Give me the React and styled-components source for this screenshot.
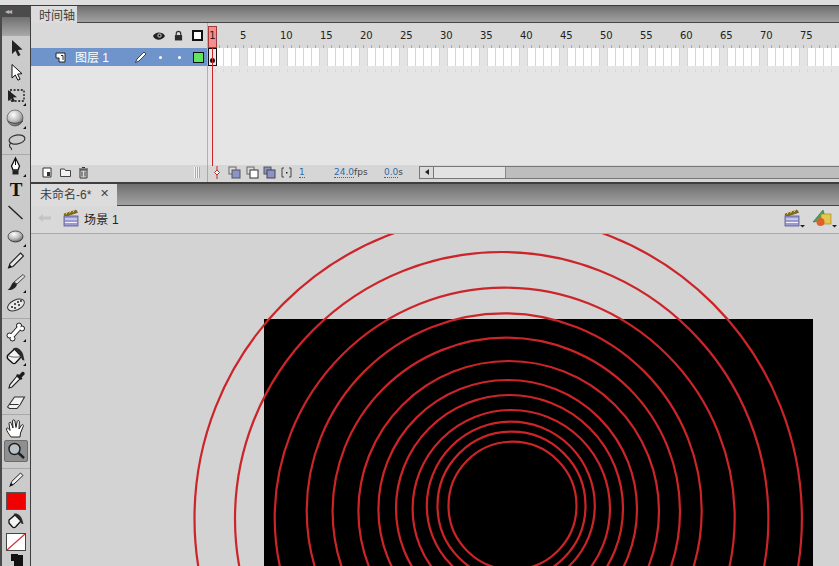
import React from 'react';
import styled, { createGlobalStyle } from 'styled-components';

const GlobalStyle = createGlobalStyle`
  html, body {
    margin: 0;
    padding: 0;
    background: #d3d3d3;
  }
  * {
    box-sizing: border-box;
  }
`;

const Window = styled.div`
  width: 839px;
  height: 566px;
  overflow: hidden;
  display: flex;
  flex-direction: column;
  font-family: 'Liberation Sans', 'Noto Sans CJK SC', sans-serif;
  color: #222;
  background: #d3d3d3;
`;

const TopStrip = styled.div`
  height: 6px;
  flex: none;
  background: #dedede;
  border-bottom: 1px solid #3c3c3c;
`;

const Workspace = styled.div`
  flex: 1;
  min-height: 0;
  display: flex;
`;

/* left tool column */
const Toolbar = styled.div`
  width: 31px;
  flex: none;
  display: flex;
  flex-direction: column;
  background: #cbcbcb;
  border-left: 2px solid #4a4a4a;
  border-right: 1px solid #3e3e3e;
`;

const ToolbarHead = styled.div`
  height: 11px;
  margin-left: -2px;
  margin-right: -1px;
  background: #4b4b4b;
  color: #b9b9b9;
  font-size: 8px;
  line-height: 11px;
  padding-left: 5px;
  letter-spacing: -1px;
`;

const ToolbarGrip = styled.div`
  height: 19px;
  flex: none;
  background: linear-gradient(#707070, #a9a9a9);
`;

const Tool = styled.div`
  height: ${(p) => p.$h}px;
  flex: none;
  display: flex;
  align-items: center;
  justify-content: center;
  font-family: 'Liberation Serif', serif;
  font-weight: 700;
  font-size: 19px;
  color: #111;
  border-radius: 2px;
  ${(p) => p.$active && 'background: #8f8f8f; border: 1px solid #6c6c6c; margin: 0 2px;'}
`;

const ToolSep = styled.div`
  height: ${(p) => p.$h || 1}px;
  flex: none;
  border-bottom: 1px solid #a9a9a9;
`;

const Swatch = styled.div`
  width: 20px;
  height: 18px;
  background: ${(p) => p.$color};
  border: 1px solid #555;
`;

const Main = styled.div`
  flex: 1;
  min-width: 0;
  display: flex;
  flex-direction: column;
`;

const TabBar = styled.div`
  height: ${(p) => p.$h}px;
  flex: none;
  display: flex;
  background: linear-gradient(#6f6f6f, #a2a2a2);
  border-bottom: 1px solid #444;
`;

const Tab = styled.div`
  width: ${(p) => p.$w}px;
  display: flex;
  align-items: center;
  gap: 9px;
  padding-left: ${(p) => p.$pad}px;
  padding-bottom: ${(p) => p.$pb || 0}px;
  background: #dcdcdc;
  font-size: 12px;
  color: #3c3c3c;
  margin-bottom: -1px;
`;

const TabClose = styled.span`
  font-size: 11px;
  color: #444;
`;

/* timeline panel */
const Timeline = styled.div`
  position: relative;
  height: 161px;
  flex: none;
  display: grid;
  grid-template-columns: 177px 1fr;
  grid-template-rows: 25px 18px 1fr 17px;
  background: #e5e5e5;
  border-bottom: 2px solid #3f3f3f;
`;

const LayerHead = styled.div`
  background: #d9d9d9;
  display: flex;
  align-items: center;
  justify-content: flex-end;
  gap: 9px;
  padding-right: 4px;
  border-right: 1px solid #b0b0b0;
`;

const Ruler = styled.div`
  display: flex;
  padding-left: 32px;
  background-color: #d9d9d9;
  background-image: repeating-linear-gradient(90deg, transparent 0 3px, #a8a8a8 3px 4px, transparent 4px 8px);
  background-size: 100% 3px;
  background-position: 0 bottom;
  background-repeat: no-repeat;
`;

const RulerNum = styled.span`
  width: 40px;
  flex: none;
  font-family: 'DejaVu Sans', sans-serif;
  font-size: 10px;
  line-height: 25px;
  color: #222;
`;

const LayerRow = styled.div`
  background: #6e94cb;
  display: flex;
  align-items: center;
  color: #fff;
  font-size: 12px;
  border-right: 1px solid #b0b0b0;
`;

const LayerIcon = styled.span`
  display: flex;
  margin-left: ${(p) => p.$ml}px;
`;

const LayerName = styled.span`
  margin-left: ${(p) => p.$ml}px;
  margin-bottom: 2px;
  width: ${(p) => p.$w}px;
  white-space: nowrap;
`;

const LayerDot = styled.span`
  width: 3px;
  height: 3px;
  border-radius: 50%;
  background: #fff;
  margin-left: ${(p) => p.$ml}px;
`;

const OutlineBox = styled.span`
  width: 11px;
  height: 11px;
  background: ${(p) => p.$fill};
  border: ${(p) => p.$bw}px solid #111;
  margin-left: ${(p) => p.$ml}px;
`;

const FrameRow = styled.div`
  display: flex;
  overflow: hidden;
  background: #fff;
`;

const Frame = styled.div`
  width: 8px;
  flex: none;
  background: ${(p) => (p.$fifth ? '#e4e4e4' : '#fff')};
  border-right: 1px solid #d4d4d4;
`;

const KeyFrame = styled(Frame)`
  border: 1px solid #111;
  width: 9px;
  margin-right: -1px;
  background: #e9e9e9;
  display: flex;
  align-items: flex-end;
  justify-content: center;
  padding-bottom: 2px;
  position: relative;
  z-index: 3;
  &::after {
    content: '';
    width: 5px;
    height: 5px;
    border-radius: 50%;
    background: #111;
  }
`;

const LayerEmpty = styled.div`
  border-right: 1px solid #b0b0b0;
`;

const FramesEmpty = styled.div`
  background-image: repeating-linear-gradient(90deg, transparent 0 7px, #d8d8d8 7px 8px);
  background-size: 100% 3px;
  background-repeat: no-repeat;
  background-position: 0 3px;
`;

const StatusLeft = styled.div`
  background: #d6d6d6;
  display: flex;
  align-items: center;
  padding-left: 10px;
  padding-bottom: 3px;
  gap: 5px;
  border-right: 1px solid #a8a8a8;
  position: relative;
`;

const Grip = styled.div`
  width: 6px;
  height: 11px;
  margin-left: auto;
  margin-right: 7px;
  background: repeating-linear-gradient(90deg, #f4f4f4 0 1px, #aaa 1px 2px, transparent 2px 2px);
`;

const StatusRight = styled.div`
  background: #d6d6d6;
  display: flex;
  align-items: center;
  padding-bottom: 3px;
  font-size: 10px;
  color: #444;
`;

const OnionIcon = styled.span`
  display: flex;
  margin-left: ${(p) => p.$ml}px;
`;

const StatusValue = styled.span`
  margin-left: ${(p) => p.$ml}px;
  white-space: nowrap;
  width: ${(p) => p.$w}px;
  font-family: 'DejaVu Sans', sans-serif;
  font-size: 9px;
`;

const LinkValue = styled.span`
  color: #2f6cae;
  border-bottom: 1px dotted #2f6cae;
`;

const ScrollBar = styled.div`
  margin-left: auto;
  width: 421px;
  height: 13px;
  flex: none;
  display: flex;
  background: #bdbdbd;
  border: 1px solid #777;
  border-right: none;
`;

const ScrollArrow = styled.div`
  width: 14px;
  display: flex;
  align-items: center;
  justify-content: center;
  background: #dadada;
  border-right: 1px solid #777;
  &::before {
    content: '';
    border-style: solid;
    border-width: 3.5px 4px 3.5px 0;
    border-color: transparent #222 transparent transparent;
  }
`;

const ScrollThumb = styled.div`
  width: 72px;
  background: #e2e2e2;
  border-right: 1px solid #888;
`;

const Playhead = styled.div`
  position: absolute;
  left: 177px;
  top: 3px;
  width: 9px;
  height: 22px;
  background: #f58f8f;
  border: 1px solid #a23a3a;
  color: #222;
  font-family: 'DejaVu Sans', sans-serif;
  font-size: 10px;
  line-height: 18px;
  text-align: center;
  z-index: 4;
  &::after {
    content: '';
    position: absolute;
    left: 3px;
    top: 21px;
    width: 1px;
    height: 118px;
    background: #c9272b;
  }
`;

const OnionMarker = styled.span`
  display: flex;
  margin-left: 5px;
`;

/* scene bar */
const SceneBar = styled.div`
  height: 28px;
  flex: none;
  display: flex;
  align-items: center;
  background: #d9d9d9;
  border-bottom: 1px solid #a9a9a9;
  padding-left: 7px;
  padding-bottom: 3px;
  font-size: 12px;
  color: #222;
`;

const BackArrow = styled.svg`
  margin-right: 11px;
`;

const SceneName = styled.span`
  margin-left: 4px;
  letter-spacing: 0.2px;
`;

const SceneTools = styled.div`
  margin-left: auto;
  display: flex;
  align-items: center;
  gap: 6px;
  padding-right: 2px;
`;

/* the stage is a free canvas */
const Stage = styled.div`
  position: relative;
  flex: 1;
  min-height: 0;
  overflow: hidden;
  background: #d3d3d3;
`;

const Artboard = styled.div`
  position: absolute;
  left: 233px;
  top: 85px;
  width: 549px;
  height: 400px;
  background: #000;
`;

const Rings = styled.svg`
  position: absolute;
  left: 0;
  top: 0;
`;

const HiddenDefs = styled.svg`
  position: absolute;
`;

const rings = [
  [498.2, 518.4, 303.7],
  [501.7, 518.7, 266.7],
  [504.7, 517.7, 230],
  [504.2, 510.8, 197.5],
  [506.3, 511.4, 173.7],
  [508.7, 511.3, 150.3],
  [507.7, 509.3, 129.3],
  [509.5, 508.5, 113.5],
  [511.3, 508.7, 98.7],
  [510.8, 505.7, 84],
  [511.5, 505.7, 74],
  [512.5, 505.7, 64],
];

const Corner = () => <path d="M21 18v3h-3z" fill="#111" />;

const Icon = ({ children, s = 22 }) => (
  <svg width={s} height={s} viewBox="0 0 22 22">{children}</svg>
);

const Defs = () => (
  <HiddenDefs width="0" height="0">
    <defs>
      <radialGradient id="ball" cx="40%" cy="30%" r="75%">
        <stop offset="0" stopColor="#fff" />
        <stop offset="0.6" stopColor="#b5b5b5" />
        <stop offset="1" stopColor="#555" />
      </radialGradient>
    </defs>
  </HiddenDefs>
);

const tools = [
  { h: 24, icon: <path d="M7 3v14l3.5-3.2 2.6 5.4 2.4-1.1-2.6-5.2 4.6-.4z" fill="#222" /> },
  { h: 24, icon: <path d="M7 3.5v13.5l3.3-3 2.600 5.200 2.200-1-2.500-5.100 4.400-.4z" fill="#fff" stroke="#111" strokeWidth="1" /> },
  {
    h: 23,
    icon: (
      <>
        <rect x="5" y="5" width="14" height="11" fill="none" stroke="#111" strokeWidth="1.300" strokeDasharray="2 1.600" />
        <path d="M3 5v11l3-2.500 2 3.500 2-1-2-3.400 4-.4z" fill="#222" />
        <Corner />
      </>
    ),
  },
  {
    h: 23,
    icon: (
      <>
        <circle cx="10" cy="10" r="8" fill="url(#ball)" stroke="#444" strokeWidth="0.600" />
        <path d="M3 13c3 3 11 3 15 0" fill="none" stroke="#444" strokeWidth="1" />
        <Corner />
      </>
    ),
  },
  {
    h: 23,
    icon: (
      <>
        <ellipse cx="12" cy="8.500" rx="8" ry="4.500" fill="none" stroke="#333" strokeWidth="1.200" transform="rotate(-10 12 8.500)" />
        <path d="M6 12c-1.500 1-2 3-1 4s2 1 1.500 3" fill="none" stroke="#333" strokeWidth="1.100" />
      </>
    ),
  },
  { sep: 2 },
  {
    h: 23,
    icon: (
      <>
        <path d="M10.500 2l4 8-1.500 4h-5l-1.500-4z" fill="#fff" stroke="#111" strokeWidth="1.300" />
        <path d="M10.500 3v6" stroke="#111" />
        <rect x="7.500" y="14.500" width="6" height="4" fill="#222" />
        <Corner />
      </>
    ),
  },
  { h: 23, text: 'T' },
  { h: 24, icon: <path d="M3.500 4l14 13" stroke="#222" strokeWidth="1.400" /> },
  {
    h: 24,
    icon: (
      <>
        <ellipse cx="10.500" cy="10.500" rx="7.500" ry="5.500" fill="url(#ball)" stroke="#333" strokeWidth="0.800" />
        <Corner />
      </>
    ),
  },
  {
    h: 23,
    icon: (
      <>
        <path d="M15.500 3l3 3-10.500 10.500-4.500 1.500 1.500-4.500z" fill="#e8e8e8" stroke="#222" strokeWidth="1.100" />
        <path d="M3.500 18l1.200-3.500 2.300 2.300z" fill="#111" />
      </>
    ),
  },
  {
    h: 22,
    icon: (
      <>
        <path d="M18 2.500l2 2-8 7.500-3-2z" fill="#ddd" stroke="#333" strokeWidth="0.900" />
        <path d="M8.500 10l3.500 2.500c-1 3.500-5 6-9.500 5.500 3-1.500 3.500-5.500 6-8z" fill="#222" />
        <Corner />
      </>
    ),
  },
  {
    h: 23,
    icon: (
      <>
        <ellipse cx="11" cy="10" rx="9" ry="5" fill="#e6e6e6" stroke="#333" strokeWidth="1" transform="rotate(-25 11 10)" />
        <g fill="#222">
          <circle cx="7" cy="12" r="1" />
          <circle cx="10" cy="9" r="1" />
          <circle cx="13" cy="7" r="1" />
          <circle cx="16" cy="6" r="1" />
          <circle cx="10" cy="13" r="1" />
          <circle cx="14" cy="10" r="1" />
        </g>
      </>
    ),
  },
  { sep: 2 },
  {
    h: 25,
    icon: (
      <>
        <g stroke="#222" fill="#222">
          <path d="M6 16L15 6" strokeWidth="5.500" />
          <circle cx="4.500" cy="14.500" r="2.500" />
          <circle cx="7.500" cy="17.500" r="2.500" />
          <circle cx="14" cy="4.500" r="2.500" />
          <circle cx="17" cy="7.500" r="2.500" />
        </g>
        <g fill="#fff">
          <path d="M6 16L15 6" stroke="#fff" strokeWidth="3.500" />
          <circle cx="4.500" cy="14.500" r="2" />
          <circle cx="7.500" cy="17.500" r="2" />
          <circle cx="14" cy="4.500" r="2" />
          <circle cx="17" cy="7.500" r="2" />
        </g>
        <Corner />
      </>
    ),
  },
  {
    h: 23,
    icon: (
      <>
        <path d="M2.500 10.500l7-6.500 7 7.500-6 6.500c-1 .8-2 .8-3 0L3 14c-.8-1-.8-2.500-.5-3.500z" fill="#f2f2f2" stroke="#111" strokeWidth="1.400" />
        <path d="M3 10.500c3 2 9 2 13 1" fill="none" stroke="#555" strokeWidth="0.900" />
        <path d="M8 3.500c4-2 8 1 10 5.500l1.500 6.500-2.200-.5L15 9.500z" fill="#2a2a2a" />
        <Corner />
      </>
    ),
  },
  {
    h: 23,
    icon: (
      <>
        <path d="M12 8l3 3-8 8-3 1 .8-3.200z" fill="#f4f4f4" stroke="#222" strokeWidth="1.100" />
        <path d="M11 7l5 5 1.500-1.500-1-1 3-3c1-1.500-1-3.500-2.500-2.500l-3 3-1-1z" fill="#1c1c1c" />
      </>
    ),
  },
  {
    h: 23,
    icon: <path d="M2.500 16l7-10h10l-4.500 8-3 3.500H4.500zM4 13.500h9.500" fill="#f2f2f2" stroke="#333" strokeWidth="1.100" />,
  },
  { sep: 2 },
  {
    h: 25,
    icon: (
      <path
        d="M6 20c-2-3-4.500-6-4.500-8s2 -1 3.500 1.500L4 6.500c0-1.500 2-1.500 2.300 0L8 11l-.5-7c0-1.500 2.200-1.500 2.400 0L11 10.500l1.200-6c.3-1.500 2.300-1.200 2.200.3L14 12l2.500-4c1-1 2.300 0 1.800 1.200L15.500 16l-.5 4z"
        fill="#fff"
        stroke="#222"
        strokeWidth="1"
      />
    ),
  },
  {
    h: 22,
    active: true,
    icon: (
      <>
        <circle cx="9.500" cy="9" r="5.500" fill="#b9c2c9" stroke="#1d1d1d" strokeWidth="1.400" />
        <path d="M13.500 13l5.500 5" stroke="#1d1d1d" strokeWidth="2.400" />
      </>
    ),
  },
  { sep: 7 },
  {
    h: 22,
    icon: (
      <>
        <path d="M15.500 4l2.500 2.500-9 8.500-3.500 1 1.200-3.500z" fill="#f0f0f0" stroke="#222" />
        <path d="M4 18l2-4 2.500 2z" fill="#111" />
      </>
    ),
  },
  { h: 19, swatch: '#f00000' },
  {
    h: 22,
    icon: (
      <>
        <path d="M4 10l6-5 6 6-5.500 6c-1 .8-2 .8-3 0L4 13z" fill="#f4f4f4" stroke="#111" strokeWidth="1.300" />
        <path d="M8.500 4c3.500-1.500 7 1.500 8.500 5l1.500 5-2-.3L14.500 9z" fill="#2a2a2a" />
      </>
    ),
  },
  { h: 20, none: true },
  {
    h: 20,
    icon: (
      <>
        <rect x="9" y="4" width="9" height="14" fill="#111" />
        <rect x="6" y="3" width="7" height="7" fill="#111" />
      </>
    ),
  },
];

const PageIcon = () => (
  <svg width="11" height="11" viewBox="0 0 11 11">
    <path d="M1 1h9v9H4V6H1z" fill="#fff" stroke="#222" strokeWidth="1" />
    <path d="M6 3.500h2V8" fill="none" stroke="#222" />
  </svg>
);

const EyeIcon = () => (
  <svg width="12" height="10" viewBox="0 0 12 10">
    <path d="M0 5c2-4 9-5 12 0-3 5-10 5-12 0z" fill="#222" />
    <circle cx="6.500" cy="4.500" r="2.200" fill="#aaa" />
    <circle cx="6.500" cy="4.500" r="1" fill="#111" />
  </svg>
);

const LockIcon = () => (
  <svg width="9" height="11" viewBox="0 0 10 11">
    <path d="M2.500 5V3.500a2.500 2.500 0 0 1 5 0V5" fill="none" stroke="#333" strokeWidth="1.300" />
    <rect x="1" y="5" width="8" height="6" fill="#2b2b2b" />
  </svg>
);

const PencilIcon = () => (
  <svg width="13" height="13" viewBox="0 0 13 13">
    <path d="M10 1l2 2-7 7-3.500 1.500L3 8z" fill="#fff" stroke="#222" strokeWidth="0.800" />
  </svg>
);

const SmallIcon = ({ children }) => (
  <svg width="13" height="13" viewBox="0 0 13 13">{children}</svg>
);

const Clapper = ({ caret }) => (
  <svg width={caret ? 21 : 17} height="20" viewBox={caret ? '0 0 21 20' : '0 0 17 20'}>
    <path d="M1 6l12-4 1.500 2.500L2 8.500z" fill="#7c6a1c" stroke="#5c4c10" strokeWidth="0.600" />
    <path d="M3 6.500l1.500-3M6.500 5.300L8 2.500M10 4.200l1.500-2.400" stroke="#e8d76a" strokeWidth="1" />
    <rect x="1" y="8" width="14" height="10" fill="#9a9ad0" stroke="#5b5b8c" strokeWidth="0.800" />
    <path d="M2 11h12M2 14.500h12" stroke="#f0f0ff" strokeWidth="1.200" />
    {caret && <path d="M16 17h5l-2.500 2.500z" fill="#222" />}
  </svg>
);

const SymbolIcon = () => (
  <svg width="26" height="20" viewBox="0 0 26 20">
    <path d="M2 14L12 2l3 10z" fill="#4aa05a" stroke="#2f6a3a" strokeWidth="0.600" />
    <rect x="10" y="6" width="10" height="10" fill="#e3c74e" stroke="#9a8420" strokeWidth="0.600" />
    <circle cx="9.500" cy="14" r="4" fill="#e0602c" />
    <path d="M21 17h5l-2.500 2.500z" fill="#222" />
  </svg>
);

const frames = Array.from({ length: 79 }, (_, i) => i);
const labels = Array.from({ length: 15 }, (_, i) => (i + 1) * 5);

export default function App() {
  return (
    <Window>
      <GlobalStyle />
      <Defs />
      <TopStrip />
      <Workspace>
        <Toolbar>
          <ToolbarHead>◂◂</ToolbarHead>
          <ToolbarGrip />
          {tools.map((t, i) => {
            if (t.sep) return <ToolSep key={i} $h={t.sep} />;
            if (t.swatch) return <Tool key={i} $h={t.h}><Swatch $color={t.swatch} /></Tool>;
            if (t.none) {
              return (
                <Tool key={i} $h={t.h}>
                  <svg width="20" height="18" viewBox="0 0 20 18">
                    <rect x="0.500" y="0.500" width="19" height="17" fill="#fff" stroke="#444" />
                    <path d="M1 17L19 1" stroke="#d03030" strokeWidth="1.200" />
                  </svg>
                </Tool>
              );
            }
            return (
              <Tool key={i} $h={t.h} $active={t.active}>
                {t.text || <Icon>{t.icon}</Icon>}
              </Tool>
            );
          })}
        </Toolbar>
        <Main>
          <TabBar $h={17}>
            <Tab $w={46} $pad={8}>时间轴</Tab>
          </TabBar>
          <Timeline>
            <LayerHead>
              <EyeIcon />
              <LockIcon />
              <OutlineBox $fill="#fff" $bw={2} $ml={0} />
            </LayerHead>
            <Ruler>
              {labels.map((n) => <RulerNum key={n}>{n}</RulerNum>)}
            </Ruler>
            <LayerRow>
              <LayerIcon $ml={24}><PageIcon /></LayerIcon>
              <LayerName $ml={9} $w={59}>图层 1</LayerName>
              <LayerIcon $ml={0}><PencilIcon /></LayerIcon>
              <LayerDot $ml={12} />
              <LayerDot $ml={16} />
              <OutlineBox $fill="#5fe85f" $bw={1} $ml={12} />
            </LayerRow>
            <FrameRow>
              <KeyFrame />
              {frames.slice(1).map((i) => <Frame key={i} $fifth={i % 5 === 4} />)}
            </FrameRow>
            <LayerEmpty />
            <FramesEmpty />
            <StatusLeft>
              <SmallIcon><path d="M2 2h8v9H2z" fill="#fff" stroke="#333" /><path d="M6 6h3v4H6z" fill="#333" /></SmallIcon>
              <SmallIcon><path d="M1.500 3h4l1 1.500h5v6h-10z" fill="#f2f2f2" stroke="#444" /></SmallIcon>
              <SmallIcon><path d="M3 4h7v8H3z" fill="#ddd" stroke="#333" /><path d="M2 3h9M5 1.500h3M5 5.500v5M8 5.500v5" stroke="#333" /></SmallIcon>
              <Grip />
            </StatusLeft>
            <StatusRight>
              <OnionMarker>
                <svg width="8" height="13" viewBox="0 0 8 13">
                  <path d="M4 0v13" stroke="#c9272b" />
                  <path d="M4 4l2.500 2.500L4 9 1.500 6.500z" fill="#fff" stroke="#c9272b" />
                </svg>
              </OnionMarker>
              <OnionIcon $ml={7}><SmallIcon><rect x="1" y="1" width="7" height="7" fill="#ddd" stroke="#666" /><rect x="4" y="4" width="8" height="8" fill="#8c93c8" stroke="#555" /></SmallIcon></OnionIcon>
              <OnionIcon $ml={5}><SmallIcon><rect x="1" y="1" width="7" height="7" fill="#ddd" stroke="#666" /><rect x="4" y="4" width="8" height="8" fill="#fff" stroke="#333" /></SmallIcon></OnionIcon>
              <OnionIcon $ml={4}><SmallIcon><rect x="1" y="1" width="7" height="7" fill="#8c93c8" stroke="#555" /><rect x="4" y="4" width="8" height="8" fill="#8c93c8" stroke="#444" /></SmallIcon></OnionIcon>
              <OnionIcon $ml={4}><SmallIcon><path d="M4 2H2v9h2M9 2h2v9H9" fill="none" stroke="#444" /><rect x="6" y="6" width="1.500" height="1.500" fill="#222" /></SmallIcon></OnionIcon>
              <StatusValue $ml={6} $w={35}><LinkValue>1</LinkValue></StatusValue>
              <StatusValue $ml={0} $w={50}><LinkValue>24.0</LinkValue>fps</StatusValue>
              <StatusValue $ml={0} $w={30}><LinkValue>0.0</LinkValue>s</StatusValue>
              <ScrollBar>
                <ScrollArrow />
                <ScrollThumb />
              </ScrollBar>
            </StatusRight>
            <Playhead>1</Playhead>
          </Timeline>
          <TabBar $h={22}>
            <Tab $w={86} $pad={9} $pb={3}>未命名-6*<TabClose>✕</TabClose></Tab>
          </TabBar>
          <SceneBar>
            <BackArrow width="14" height="10" viewBox="0 0 14 10">
              <path d="M0 5l5-4v2.500h8v3H5V9z" fill="#c4c4c4" />
            </BackArrow>
            <Clapper />
            <SceneName>场景 1</SceneName>
            <SceneTools>
              <Clapper caret />
              <SymbolIcon />
            </SceneTools>
          </SceneBar>
          <Stage>
            <Artboard />
            <Rings width="808" height="332" viewBox="31 234 808 332">
              {rings.map(([cx, cy, r]) => (
                <circle key={r} cx={cx} cy={cy} r={r} fill="none" stroke="#cc2529" strokeWidth="2.200" />
              ))}
            </Rings>
          </Stage>
        </Main>
      </Workspace>
    </Window>
  );
}
